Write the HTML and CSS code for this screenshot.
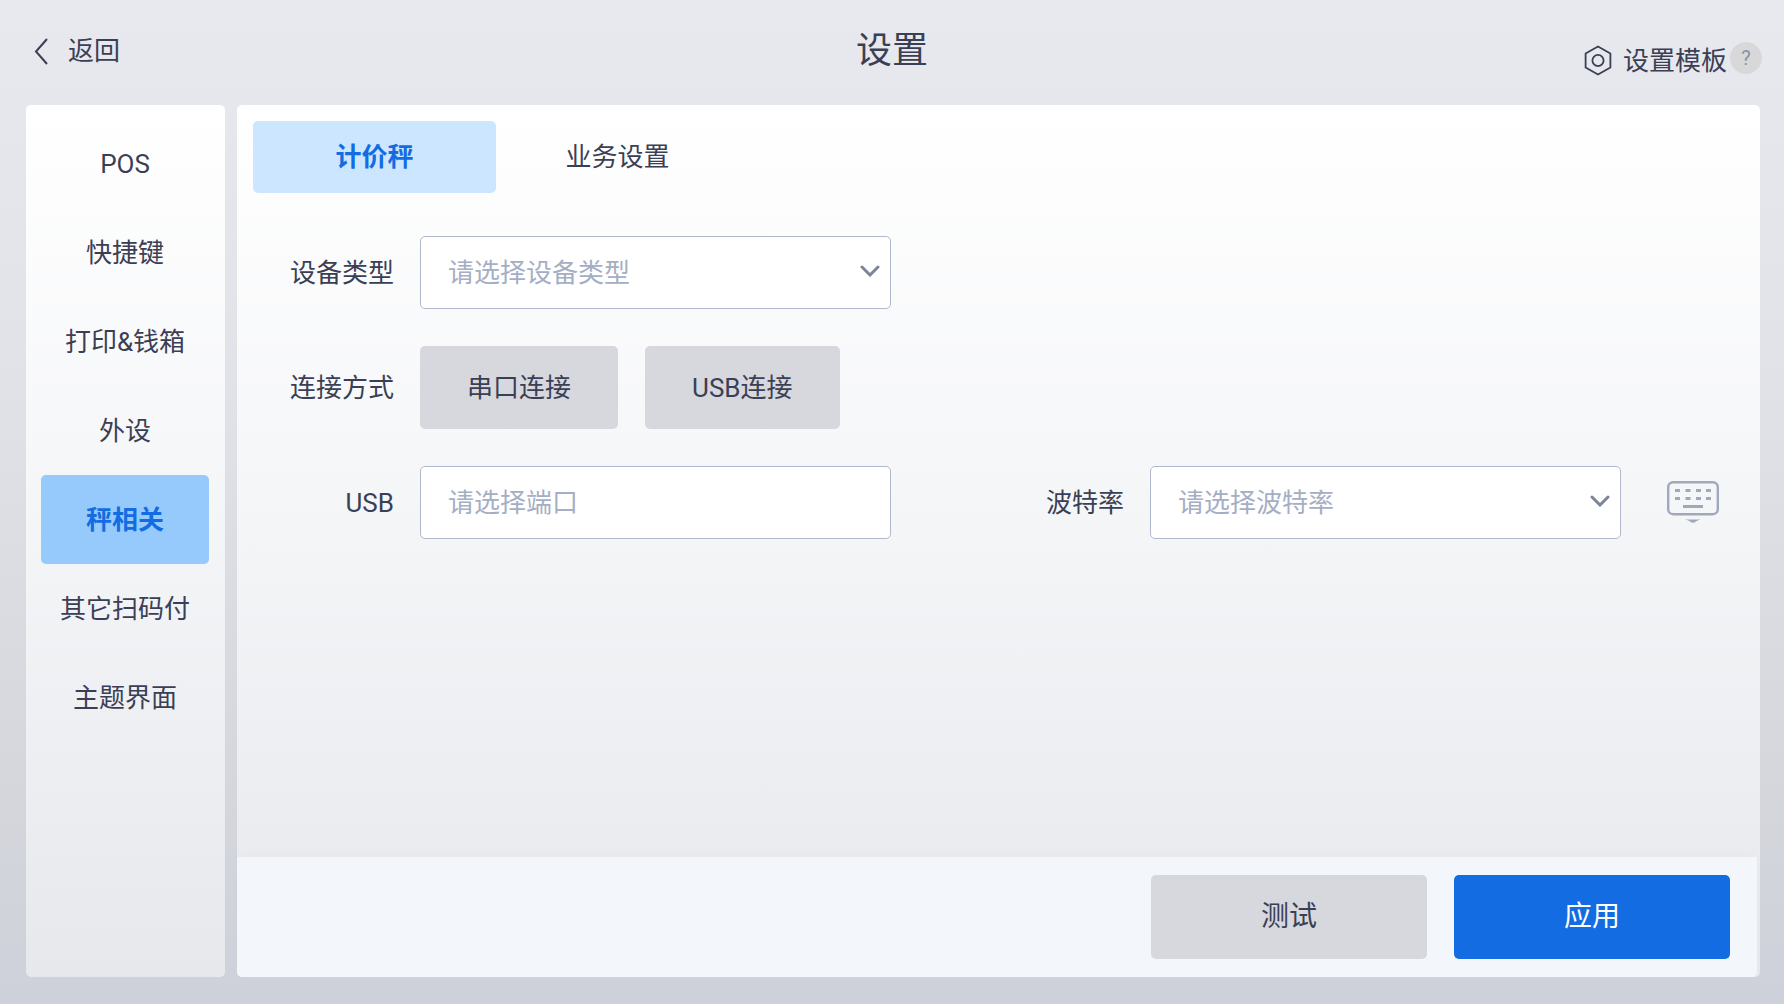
FILE: index.html
```
<!DOCTYPE html>
<html lang="zh-CN">
<head>
  <meta charset="UTF-8" />
  <meta name="viewport" content="width=device-width, initial-scale=1.0"/>
  <title>设置</title>
  <link rel="stylesheet" href="styles.css">
</head>
<body>
  <header class="header">
    <a href="#" class="back">
      <svg width="15" height="28" viewBox="0 0 15 28" fill="none" stroke="currentColor" stroke-width="2"><path d="M14 2L3 14.500 14 27"/></svg>
      返回
    </a>
    <h1>设置</h1>
    <div class="template">
      <a href="#" class="template-link">
        <svg width="28" height="32" viewBox="0 0 28 32" fill="none" stroke="currentColor" stroke-width="1.800" stroke-linejoin="round"><path d="M14 1.500L26.400 8.500V22.500L14 29.500 1.600 22.500V8.500Z"/><circle cx="14" cy="15.500" r="5.600"/></svg>
        设置模板
      </a>
      <button type="button" class="help">?</button>
    </div>
  </header>

  <div class="layout">
    <nav class="sidebar">
      <a href="#">POS</a>
      <a href="#">快捷键</a>
      <a href="#">打印&amp;钱箱</a>
      <a href="#">外设</a>
      <a href="#" class="active">秤相关</a>
      <a href="#">其它扫码付</a>
      <a href="#">主题界面</a>
    </nav>

    <main class="panel">
      <div class="tabs">
        <button type="button" class="active">计价秤</button>
        <button type="button">业务设置</button>
      </div>

      <form id="scale-form" class="form">
        <div class="form-row">
          <label for="device">设备类型</label>
          <div class="select">
            <select id="device" name="device">
              <option value="">请选择设备类型</option>
            </select>
            <svg class="arrow" width="20" height="12" viewBox="0 0 20 12"><path d="M2 2l8 8 8-8"/></svg>
          </div>
        </div>

        <div class="form-row">
          <span class="label">连接方式</span>
          <div class="options">
            <button type="button">串口连接</button>
            <button type="button">USB连接</button>
          </div>
        </div>

        <div class="form-row">
          <label for="port">USB</label>
          <input type="text" id="port" name="port" placeholder="请选择端口">
          <div class="baud">
            <label for="baud">波特率</label>
            <div class="select">
              <select id="baud" name="baud">
                <option value="">请选择波特率</option>
              </select>
              <svg class="arrow" width="20" height="12" viewBox="0 0 20 12"><path d="M2 2l8 8 8-8"/></svg>
            </div>
            <button type="button" class="keyboard" aria-label="键盘">
              <svg width="52" height="44" viewBox="0 0 52 44" fill="none" stroke="currentColor" stroke-width="2.400">
                <rect x="1.200" y="1.200" width="49.600" height="32" rx="5"/>
                <path stroke-width="3" d="M8 9.500h5M18.500 9.500h5M29 9.500h5M39 9.500h5M8 17.500h5M18.500 17.500h5M29 17.500h5M39 17.500h5M16 25.500h20"/>
                <path fill="currentColor" stroke="none" d="M18 38.500h16q-3 .5-5 2-3 2.500-6 0-2-1.500-5-2z"/>
              </svg>
            </button>
          </div>
        </div>
      </form>

      <footer class="actions">
        <button type="button">测试</button>
        <button type="submit" form="scale-form" class="primary">应用</button>
      </footer>
    </main>
  </div>
</body>
</html>
```
FILE: styles.css
```
* { box-sizing: border-box; }

body {
  display: flex;
  flex-direction: column;
  min-height: 100vh;
  margin: 0;
  padding-bottom: 27px;
  font-family: Roboto, "Noto Sans CJK SC", sans-serif;
  font-size: 26px;
  line-height: 38px;
  color: #3b3f55;
  background: linear-gradient(#e8e9ee, #e2e3e9 35%, #d4d6dc 80%, #ced1da);
}

a {
  color: inherit;
  text-decoration: none;
}

button, input, select {
  margin: 0;
  padding: 0;
  border: none;
  font: inherit;
  color: inherit;
}

button {
  border-radius: 5px;
  background: none;
  cursor: pointer;
}

.header {
  display: grid;
  grid-template-columns: 1fr auto 1fr;
  align-items: start;
  height: 105px;
  padding: 0 22px;
}

.back {
  display: flex;
  align-items: center;
  gap: 20px;
  margin-top: 32px;
  padding-left: 11px;
}

h1 {
  margin: 25px 0 0;
  font-size: 36px;
  font-weight: normal;
  line-height: 52px;
}

.template {
  display: flex;
  justify-content: flex-end;
  gap: 3px;
  margin-top: 42px;
}

.template-link {
  display: flex;
  align-items: center;
  gap: 11px;
}

.help {
  width: 32px;
  height: 32px;
  border-radius: 50%;
  background: #d8d8d8;
  font-size: 20px;
  line-height: 32px;
  color: #8c93ab;
}

.layout {
  display: flex;
  flex: 1;
  gap: 12px;
  padding: 0 24px 0 26px;
}

.sidebar, .panel {
  border-radius: 5px;
  background: linear-gradient(#fff, #f5f6f8 45%, #e7e8ec);
}

.sidebar {
  flex: 0 0 199px;
  padding: 14px 16px 14px 15px;
}

.sidebar a {
  display: block;
  height: 89px;
  border-radius: 5px;
  line-height: 91px;
  text-align: center;
  white-space: nowrap;
}

.sidebar .active {
  background: #96cafd;
  color: #136ce2;
  font-weight: bold;
}

.panel {
  display: flex;
  flex: 1;
  flex-direction: column;
  min-width: 0;
}

.tabs {
  display: flex;
  padding: 16px 16px 0;
}

.tabs button {
  width: 243px;
  height: 72px;
  line-height: 36px;
}

.tabs .active {
  background: #cce6ff;
  color: #136ce2;
  font-weight: bold;
}

.form {
  display: flex;
  flex: 1;
  flex-direction: column;
  gap: 37px;
  padding: 43px 41px 42px 16px;
}

.form-row {
  display: flex;
  align-items: center;
  gap: 26px;
}

.form-row > label,
.form-row > .label {
  width: 141px;
  text-align: right;
}

.form-row input,
.form-row select {
  width: 471px;
  height: 73px;
  padding: 0 27px;
  border: 1px solid #b0b8cb;
  border-radius: 5px;
  background: #fff;
  color: #a5aec4;
}

.form-row input::placeholder {
  color: #a5aec4;
}

.select {
  position: relative;
  display: flex;
}

.select select {
  appearance: none;
}

.arrow {
  position: absolute;
  top: 29px;
  right: 11px;
  fill: none;
  stroke: #7d8497;
  stroke-width: 3;
  stroke-linecap: round;
  pointer-events: none;
}

.options {
  display: flex;
  gap: 27px;
}

.options button {
  height: 83px;
  padding: 0 47px;
  background: #d7d8dd;
}

.baud {
  display: flex;
  align-items: center;
  gap: 26px;
  margin-left: auto;
}

.keyboard {
  display: flex;
  margin-left: 20px;
  color: #a2a8bc;
}

.actions {
  display: flex;
  justify-content: flex-end;
  gap: 27px;
  margin-right: 3px;
  padding: 18px 27px;
  border-radius: 0 0 5px 5px;
  background: #f3f6fb;
  box-shadow: 0 -6px 12px rgba(0, 0, 0, 0.01);
}

.actions button {
  width: 276px;
  height: 84px;
  background: #d7d8dd;
  font-size: 28px;
}

.actions .primary {
  background: #136ce2;
  color: #fff;
}
```
